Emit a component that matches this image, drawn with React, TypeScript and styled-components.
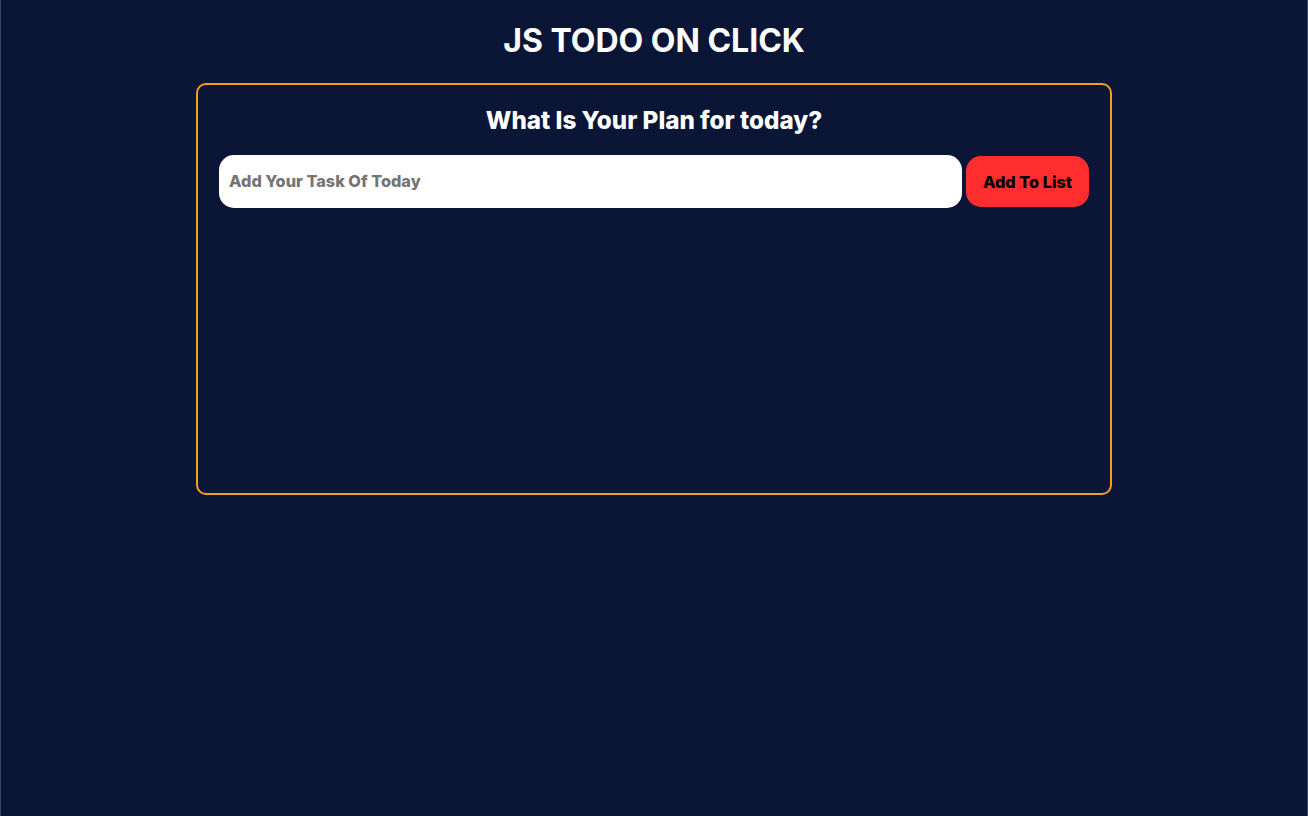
import React from "react";
import styled, { createGlobalStyle } from "styled-components";

const GlobalStyle = createGlobalStyle`
  html, body { margin: 0; padding: 0; background: #0b1636; }
  body { font-family: Inter, "Noto Sans", sans-serif; }
  * { box-sizing: border-box; }
`;

const Page = styled.div`
  min-height: 816px;
  background: #0b1636;
  border-left: 1px solid #3a4560;
  border-right: 1px solid #3a4560;
  display: flex;
  flex-direction: column;
  align-items: center;
  padding-top: 21px;
`;

const Title = styled.h1`
  margin: 0;
  font-size: 32px;
  line-height: 39px;
  font-weight: 700;
  color: #ffffff;
`;

const Card = styled.section`
  margin-top: 23px;
  width: 916px;
  height: 412px;
  border: 2px solid #f4a01c;
  border-radius: 10px;
  padding: 21px 21px 0 21px;
  display: flex;
  flex-direction: column;
  align-items: stretch;
`;

const Heading = styled.h2`
  margin: 0;
  text-align: center;
  font-size: 24.2px;
  line-height: 29px;
  font-weight: 800;
  color: #ffffff;
`;

const Row = styled.div`
  margin-top: 20px;
  display: flex;
  align-items: center;
  gap: 4px;
`;

const TaskInput = styled.input`
  flex: 1;
  height: 53px;
  border: none;
  outline: none;
  border-radius: 15px;
  background: #ffffff;
  padding: 0 10px 1px 10px;
  font-family: Inter, "Noto Sans", sans-serif;
  font-size: 16.3px;
  font-weight: 800;
  color: #222;
  &::placeholder {
    color: #757575;
    opacity: 1;
  }
`;

const AddButton = styled.button`
  width: 123px;
  height: 51px;
  border: none;
  border-radius: 15px;
  background: #ff2d2d;
  color: #000000;
  font-family: Inter, "Noto Sans", sans-serif;
  font-size: 16.3px;
  font-weight: 800;
  cursor: pointer;
`;

export default function App() {
  return (
    <>
      <GlobalStyle />
      <Page>
        <Title>JS TODO ON CLICK</Title>
        <Card>
          <Heading>What Is Your Plan for today?</Heading>
          <Row>
            <TaskInput placeholder="Add Your Task Of Today" />
            <AddButton>Add To List</AddButton>
          </Row>
        </Card>
      </Page>
    </>
  );
}
